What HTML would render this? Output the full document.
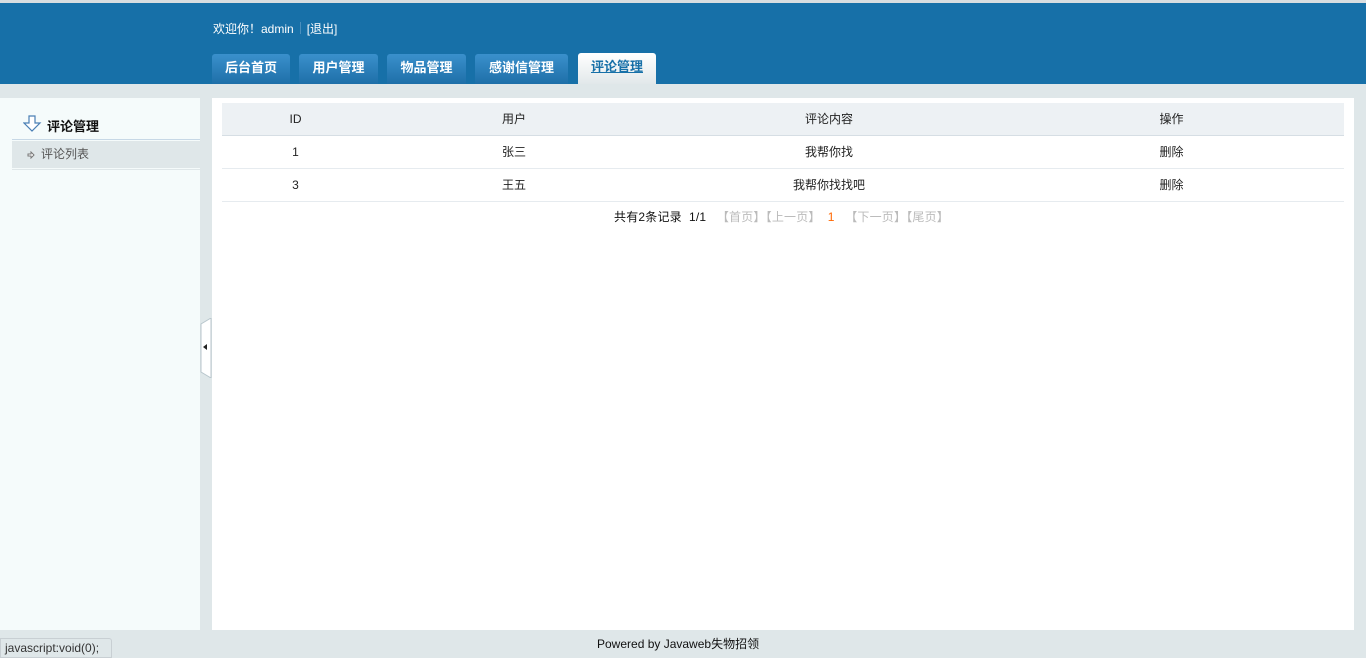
<!DOCTYPE html>
<html><head><meta charset="utf-8"><style>
*{margin:0;padding:0;box-sizing:border-box}
body{width:1366px;height:658px;background:#dfe7e9;font-family:"Liberation Sans","Noto Sans CJK SC",sans-serif;font-size:12px;color:#222;position:relative;overflow:hidden}
.top{position:absolute;left:0;top:0;width:1366px;height:3px;background:#d8dde0}
.hd{position:absolute;left:0;top:3px;width:1366px;height:81px;background:#1770a8}
.wel{position:absolute;left:213px;top:20px;color:#fff;font-size:12px}
.wel span.sep{display:inline-block;width:1px;height:12px;background:#4b8fbd;margin:0 6px;vertical-align:-1px}
.tab{position:absolute;top:54px;height:30px;background:linear-gradient(#3a90cc,#1e6fa8);color:#fff;font-weight:bold;font-size:13px;text-align:center;line-height:27px;border-radius:3px 3px 0 0}
.tab.on{top:53px;height:31px;background:linear-gradient(#fff,#e2e8ea);color:#1770a8;text-decoration:underline}
.side{position:absolute;left:0;top:98px;width:200px;height:532px;background:#f5fbfb}
.st{position:absolute;left:47px;top:116px;font-weight:bold;font-size:13px;color:#111}
.sl{position:absolute;left:12px;top:139px;width:188px;height:2px;border-top:1px solid #c7d8e6}
.si{position:absolute;left:12px;top:141px;width:188px;height:27px;background:#dfe7e9;color:#555;line-height:27px;padding-left:29px}
.sl2{position:absolute;left:12px;top:169px;width:188px;border-top:1px solid #dfe7e9}
.main{position:absolute;left:212px;top:98px;width:1142px;height:532px;background:#fff}
table{position:absolute;left:222px;top:103px;width:1122px;border-collapse:collapse}
td,th{text-align:center;height:33px;border-bottom:1px solid #e6ebef;font-weight:normal;font-size:12px}
th{background:#edf1f4;height:32px;border-bottom:1px solid #d6dee4}
.pg{position:absolute;left:614px;top:208px;font-size:12px;color:#111;letter-spacing:0.2px}
.pg .g{color:#bbb}
.ft{position:absolute;left:597px;top:635px;font-size:12px;color:#111}
.js{position:absolute;left:0;top:638px;width:112px;height:20px;background:#dfe7e9;border:1px solid #c8cfd3;border-radius:0 3px 0 0;color:#333;font-size:12px;line-height:18px;padding-left:4px}
.hand{position:absolute;left:200px;top:318px;width:12px;height:60px}
</style></head><body>
<div class="top"></div>
<div class="hd"></div>
<div class="wel">欢迎你！admin<span class="sep"></span>[退出]</div>
<div class="tab" style="left:212px;width:78px">后台首页</div>
<div class="tab" style="left:299px;width:79px">用户管理</div>
<div class="tab" style="left:387px;width:79px">物品管理</div>
<div class="tab" style="left:475px;width:93px">感谢信管理</div>
<div class="tab on" style="left:578px;width:78px">评论管理</div>
<div class="side"></div>
<svg style="position:absolute;left:23px;top:115px" width="19" height="17"><path d="M6 1h6v7h5l-8 8-8-8h5z" fill="#fff" stroke="#4a7fb5" stroke-width="1.2"/></svg>
<div class="st">评论管理</div>
<div class="sl"></div>
<div class="si">评论列表</div>
<svg style="position:absolute;left:27px;top:151px" width="8" height="8"><path d="M1 3h3V1l3 3-3 3V5H1z" fill="#fff" stroke="#777"/></svg>
<div class="sl2"></div>
<svg class="hand" viewBox="0 0 12 60"><path d="M11 0V60L1 54V6z" fill="#fff" stroke="#b8c6cc"/><path d="M3 29l4-3v6z" fill="#222"/></svg>
<div class="main"></div>
<table>
<tr><th style="width:147px">ID</th><th style="width:290px">用户</th><th style="width:340px">评论内容</th><th>操作</th></tr>
<tr><td>1</td><td>张三</td><td>我帮你找</td><td>删除</td></tr>
<tr><td>3</td><td>王五</td><td>我帮你找找吧</td><td>删除</td></tr>
</table>
<div class="pg">共有2条记录 &nbsp;1/1 &nbsp; <span class="g">【首页】【上一页】</span> &nbsp;<span style="color:#f60">1</span> &nbsp; <span class="g">【下一页】【尾页】</span></div>
<div class="ft">Powered by Javaweb失物招领</div>
<div class="js">javascript:void(0);</div>
</body></html>
